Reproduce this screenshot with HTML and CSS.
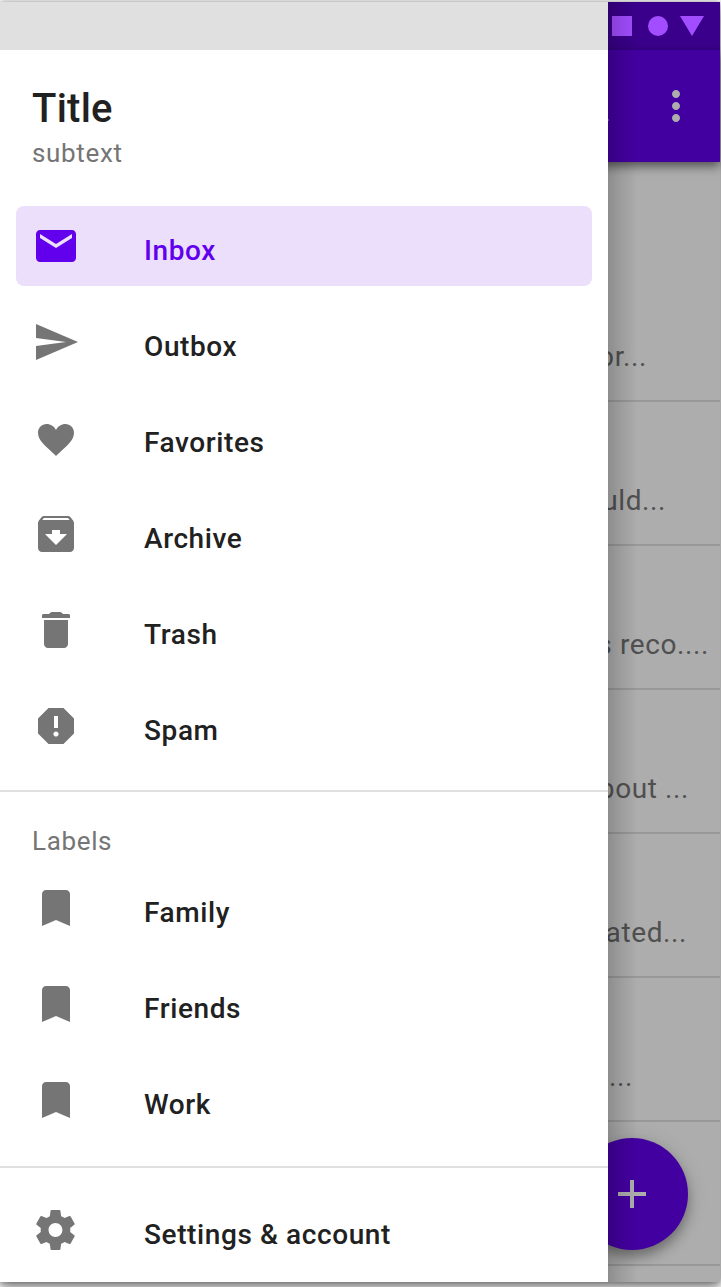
FILE: index.html
```html
<!DOCTYPE html>
<html lang="en">
<head>
<meta charset="utf-8">
<title>Inbox</title>
<link rel="stylesheet" href="styles.css">
</head>
<body>
<div class="screen">
  <div class="status-bar">
    <svg class="status-icons" width="92" height="20" viewBox="0 0 92 20"><path d="M0 0h20v20H0zM68 0h24L80 20z"/><circle cx="46" cy="10" r="10"/></svg>
  </div>
  <header class="app-bar">
    <svg class="icon" viewBox="0 0 24 24"><path d="M15.5 14h-.79l-.28-.27C15.41 12.59 16 11.11 16 9.5 16 5.91 13.09 3 9.5 3S3 5.91 3 9.5 5.91 16 9.5 16c1.61 0 3.09-.59 4.23-1.57l.27.28v.79l5 4.99L20.49 19l-4.99-5zm-6 0C7.01 14 5 11.99 5 9.5S7.01 5 9.5 5 14 7.01 14 9.5 11.99 14 9.5 14z"/></svg>
    <svg class="icon" viewBox="0 0 24 24"><path d="M12 8c1.1 0 2-.9 2-2s-.9-2-2-2-2 .9-2 2 .9 2 2 2zm0 2c-1.1 0-2 .9-2 2s.9 2 2 2 2-.9 2-2-.9-2-2-2zm0 6c-1.1 0-2 .9-2 2s.9 2 2 2 2-.9 2-2-.9-2-2-2z"/></svg>
  </header>
  <main class="messages">
    <p class="message end-74">or...</p>
    <p class="message end-55">uld...</p>
    <p class="message end-12">s reco....</p>
    <p class="message end-32">bout ...</p>
    <p class="message end-34">ated...</p>
    <p class="message end-88">...</p>
    <p class="message"></p>
  </main>
  <button class="fab" aria-label="Add"><svg class="icon" viewBox="0 0 24 24"><path d="M19 13h-6v6h-2v-6H5v-2h6V5h2v6h6z"/></svg></button>
  <div class="drawer-shadow"></div>
  <aside class="drawer">
    <div class="drawer-status"></div>
    <div class="drawer-header">
      <h1 class="title">Title</h1>
      <p class="subtext">subtext</p>
    </div>
    <nav class="menu">
      <a class="item active"><svg class="icon" viewBox="0 0 24 24"><path d="M20 4H4c-1.1 0-1.99.9-1.99 2L2 18c0 1.100.9 2 2 2h16c1.100 0 2-.9 2-2V6c0-1.100-.9-2-2-2zm0 4l-8 5-8-5V6l8 5 8-5v2z"/></svg><span class="label">Inbox</span></a>
      <a class="item"><svg class="icon" viewBox="0 0 24 24"><path d="M2.010 21L23 12 2.010 3 2 10l15 2-15 2z"/></svg><span class="label">Outbox</span></a>
      <a class="item"><svg class="icon" viewBox="0 0 24 24"><path d="M12 21C11 20 7.500 16.900 5.500 14.800C4 13.200 3 11.500 3 9.300C3 6.900 4.900 5 7.300 5C9.300 5 11.200 6.200 12 8C12.800 6.200 14.700 5 16.700 5C19.100 5 21 6.900 21 9.300C21 11.500 20 13.200 18.500 14.800C16.500 16.900 13 20 12 21z"/></svg><span class="label">Favorites</span></a>
      <a class="item"><svg class="icon" viewBox="0 0 24 24"><path d="M20.540 5.230l-1.390-1.680C18.880 3.210 18.470 3 18 3H6c-.47 0-.88.21-1.160.55L3.460 5.230C3.170 5.570 3 6.020 3 6.500V19c0 1.100.9 2 2 2h14c1.100 0 2-.9 2-2V6.500c0-.48-.17-.93-.46-1.270zM12 17.500L6.500 12H10v-2h4v2h3.500L12 17.500zM5.120 5l.81-1h12l.94 1H5.120z"/></svg><span class="label">Archive</span></a>
      <a class="item"><svg class="icon" viewBox="0 0 24 24"><path d="M6 19c0 1.100.9 2 2 2h8c1.100 0 2-.9 2-2V7H6v12zM19 4.700Q19 4 18.200 4H15.500L15 3.500Q14.500 3 14 3H10Q9.500 3 9 3.500L8.500 4H5.800Q5 4 5 4.700V6H19z"/></svg><span class="label">Trash</span></a>
      <a class="item"><svg class="icon" viewBox="0 0 24 24"><path d="M15.730 3H8.270L3 8.270v7.460L8.270 21h7.460L21 15.730V8.270L15.730 3zM12 17.300c-.72 0-1.300-.58-1.300-1.300s.58-1.300 1.300-1.300 1.300.58 1.300 1.300-.58 1.300-1.300 1.300zm1-4.300h-2V7h2v6z"/></svg><span class="label">Spam</span></a>
    </nav>
    <h2 class="section-title">Labels</h2>
    <nav class="menu">
      <a class="item"><svg class="icon" viewBox="0 0 24 24"><path d="M17 3H7c-1.100 0-2 .9-2 2v16l7-3 7 3V5c0-1.100-.9-2-2-2z"/></svg><span class="label">Family</span></a>
      <a class="item"><svg class="icon" viewBox="0 0 24 24"><path d="M17 3H7c-1.100 0-2 .9-2 2v16l7-3 7 3V5c0-1.100-.9-2-2-2z"/></svg><span class="label">Friends</span></a>
      <a class="item"><svg class="icon" viewBox="0 0 24 24"><path d="M17 3H7c-1.100 0-2 .9-2 2v16l7-3 7 3V5c0-1.100-.9-2-2-2z"/></svg><span class="label">Work</span></a>
    </nav>
    <nav class="menu settings">
      <a class="item"><svg class="icon" viewBox="0 0 24 24"><path transform="translate(-.12 0) scale(.988 1)" d="M19.43 12.98c.04-.32.07-.64.07-.98s-.03-.66-.07-.98l2.110-1.650c.19-.15.24-.42.12-.64l-2-3.460c-.12-.22-.39-.3-.61-.22l-2.490 1c-.52-.4-1.080-.73-1.690-.98l-.38-2.650C14.460 2.180 14.250 2 14 2h-4c-.25 0-.46.18-.49.42l-.38 2.650c-.61.25-1.170.59-1.690.98l-2.490-1c-.23-.09-.49 0-.61.22l-2 3.460c-.13.22-.07.49.12.64l2.110 1.650c-.04.32-.07.65-.07.98s.03.66.07.98l-2.110 1.650c-.19.15-.24.42-.12.64l2 3.460c.12.22.39.3.61.22l2.490-1c.52.4 1.080.73 1.690.98l.38 2.650c.03.24.24.42.49.42h4c.25 0 .46-.18.49-.42l.38-2.650c.61-.25 1.170-.59 1.690-.98l2.490 1c.23.09.49 0 .61-.22l2-3.460c.12-.22.07-.49-.12-.64l-2.110-1.650zM12 15.500c-1.930 0-3.500-1.570-3.500-3.500s1.570-3.500 3.500-3.500 3.500 1.570 3.500 3.500-1.570 3.500-3.500 3.500z"/></svg><span class="label">Settings &amp; account</span></a>
    </nav>
  </aside>
</div>
</body>
</html>
```
FILE: styles.css
```css
* { box-sizing: border-box; }
body {
  margin: 0;
  height: 1287px;
  padding-top: 2px;
  overflow: hidden;
  background: #fff;
  font-family: Roboto, sans-serif;
}
h1, h2, p { margin: 0; font-weight: 400; }
.screen {
  position: relative;
  width: 720px;
  height: 1280px;
  background: #adadad;
  box-shadow: 0 8px 12px rgba(0, 0, 0, .4), 0 0 6px rgba(0, 0, 0, .42);
}
.icon { display: block; width: 48px; height: 48px; fill: currentColor; flex: none; }
.status-bar {
  display: flex;
  justify-content: flex-end;
  align-items: center;
  height: 48px;
  padding-right: 16px;
  background: #3a008b;
}
.status-icons { fill: #a24dff; }
.app-bar {
  display: flex;
  justify-content: flex-end;
  align-items: center;
  gap: 36px;
  height: 112px;
  padding-right: 20px;
  background: #4300a0;
  color: #adadad;
  box-shadow: 0 4px 10px rgba(0, 0, 0, .55);
}
.messages { padding-top: 96px; }
.message {
  height: 144px;
  padding-top: 82px;
  border-bottom: 2px solid #989898;
  color: #505050;
  font-size: 28px;
  line-height: 34px;
  letter-spacing: .6px;
  text-align: right;
}
.end-74 { padding-right: 73px; }
.end-55 { padding-right: 54px; }
.end-12 { padding-right: 11px; }
.end-32 { padding-right: 31px; }
.end-34 { padding-right: 33px; }
.end-88 { padding-right: 87px; }
.fab {
  position: absolute;
  right: 32px;
  bottom: 32px;
  display: grid;
  place-items: center;
  width: 112px;
  height: 112px;
  padding: 0;
  border: 0;
  border-radius: 50%;
  background: #4300a0;
  color: #adadad;
  box-shadow: 0 7px 12px rgba(0, 0, 0, .32), 0 2px 22px rgba(0, 0, 0, .1);
}
.drawer-shadow {
  position: absolute;
  top: 0;
  left: 608px;
  width: 30px;
  height: 1280px;
  background: linear-gradient(to right, rgba(0, 0, 0, .19), rgba(0, 0, 0, .09) 45%, transparent);
}
.drawer {
  position: absolute;
  top: 0;
  left: 0;
  width: 608px;
  height: 1280px;
  background: #fff;
  color: #212121;
}
.drawer-status { height: 48px; background: #e0e0e0; }
.drawer-header { height: 156px; padding: 35px 32px 0; }
.title { font-size: 40px; font-weight: 500; line-height: 48px; letter-spacing: .25px; }
.subtext { margin-top: 5px; font-size: 26px; line-height: 30px; letter-spacing: .65px; color: #757575; }
.menu { display: flex; flex-direction: column; gap: 16px; padding: 0 16px; }
.item {
  display: flex;
  align-items: center;
  gap: 64px;
  height: 80px;
  padding: 0 16px;
  border-radius: 8px;
  color: #757575;
}
.label { padding-top: 10px; font-size: 28px; font-weight: 500; line-height: 34px; letter-spacing: .6px; color: #212121; }
.active, .active .label { color: #6200ee; }
.active { background: #ecdffc; }
.section-title {
  height: 78px;
  margin-top: 24px;
  padding: 34px 32px 0;
  border-top: 2px solid #e0e0e0;
  color: #757575;
  font-size: 26px;
  line-height: 30px;
  letter-spacing: .65px;
}
.settings { margin-top: 26px; padding-top: 22px; border-top: 2px solid #e0e0e0; }
```
